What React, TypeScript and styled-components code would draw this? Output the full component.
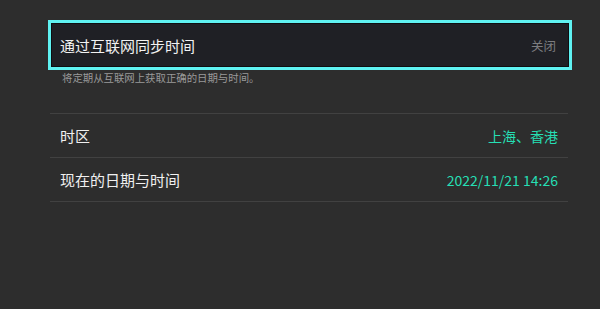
import React from 'react';
import styled, { createGlobalStyle } from 'styled-components';

const GlobalStyle = createGlobalStyle`
  html, body {
    margin: 0;
    padding: 0;
    background: #2d2d2d;
  }
  body {
    font-family: "Noto Sans CJK SC", "Noto Sans", sans-serif;
  }
`;

const Page = styled.div`
  width: 600px;
  height: 309px;
  background: #2d2d2d;
  padding: 20px 28px 0 48px;
  box-sizing: border-box;
`;

const SyncBox = styled.div`
  height: 50px;
  box-sizing: border-box;
  border: 3px solid #5ff2f2;
  box-shadow: inset 0 0 0 1px #0e0f12;
  background: #1f2025;
  display: flex;
  align-items: center;
  justify-content: space-between;
  padding: 0 13px 0 9px;
`;

const SyncLabel = styled.span`
  color: #f2f2f2;
  font-size: 15px;
`;

const SyncState = styled.span`
  color: #7c7d80;
  font-size: 12.5px;
`;

const Hint = styled.div`
  color: #9a9a9a;
  font-size: 10.4px;
  padding: 1px 0 0 14px;
  line-height: 14px;
`;

const List = styled.div`
  margin: 28px 4px 0 2px;
  border-top: 1px solid #414141;
`;

const Row = styled.div`
  height: 43px;
  border-bottom: 1px solid #414141;
  display: flex;
  align-items: center;
  justify-content: space-between;
  padding: 0 10px;
`;

const RowLabel = styled.span`
  color: #f0f0f0;
  font-size: 15px;
`;

const RowValue = styled.span`
  color: #26dfb4;
  font-size: 14px;
`;

export default function App() {
  return (
    <>
      <GlobalStyle />
      <Page>
        <SyncBox>
          <SyncLabel>通过互联网同步时间</SyncLabel>
          <SyncState>关闭</SyncState>
        </SyncBox>
        <Hint>将定期从互联网上获取正确的日期与时间。</Hint>
        <List>
          <Row>
            <RowLabel>时区</RowLabel>
            <RowValue>上海、香港</RowValue>
          </Row>
          <Row>
            <RowLabel>现在的日期与时间</RowLabel>
            <RowValue>2022/11/21 14:26</RowValue>
          </Row>
        </List>
      </Page>
    </>
  );
}
